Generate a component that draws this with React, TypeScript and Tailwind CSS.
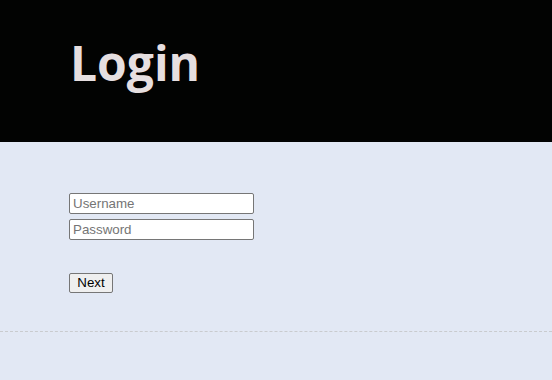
export default function App() {
  return (
    <div className="min-h-[380px] w-full bg-[#e2e8f4]" style={{ fontFamily: '"Liberation Sans", Arial, sans-serif' }}>
      <div className="h-[142px] bg-[#020302] pl-[70px] pt-[35px]">
        <h1 className="text-[48px] font-bold leading-[56px] text-[#e6dfe0]" style={{ fontFamily: '"Open Sans", sans-serif' }}>
          Login
        </h1>
      </div>
      <div className="pl-[69px] pt-[51px]">
        <div className="flex flex-col gap-[5px]">
          <input
            placeholder="Username"
            className="h-[21px] w-[185px] rounded-[2px] border border-[#767676] bg-white px-[3px] text-[13.33px] text-black placeholder:text-[#757575] outline-none"
          />
          <input
            type="password"
            placeholder="Password"
            className="h-[21px] w-[185px] rounded-[2px] border border-[#767676] bg-white px-[3px] text-[13.33px] text-black placeholder:text-[#757575] outline-none"
          />
        </div>
        <button className="mt-[33px] h-[20px] w-[44px] rounded-[2px] border border-[#767676] bg-[#efefef] text-[13.33px] leading-[18px] text-black">
          Next
        </button>
      </div>
      <div className="mt-[37px] border-t border-dashed border-[#c9cbce]"></div>
    </div>
  );
}
